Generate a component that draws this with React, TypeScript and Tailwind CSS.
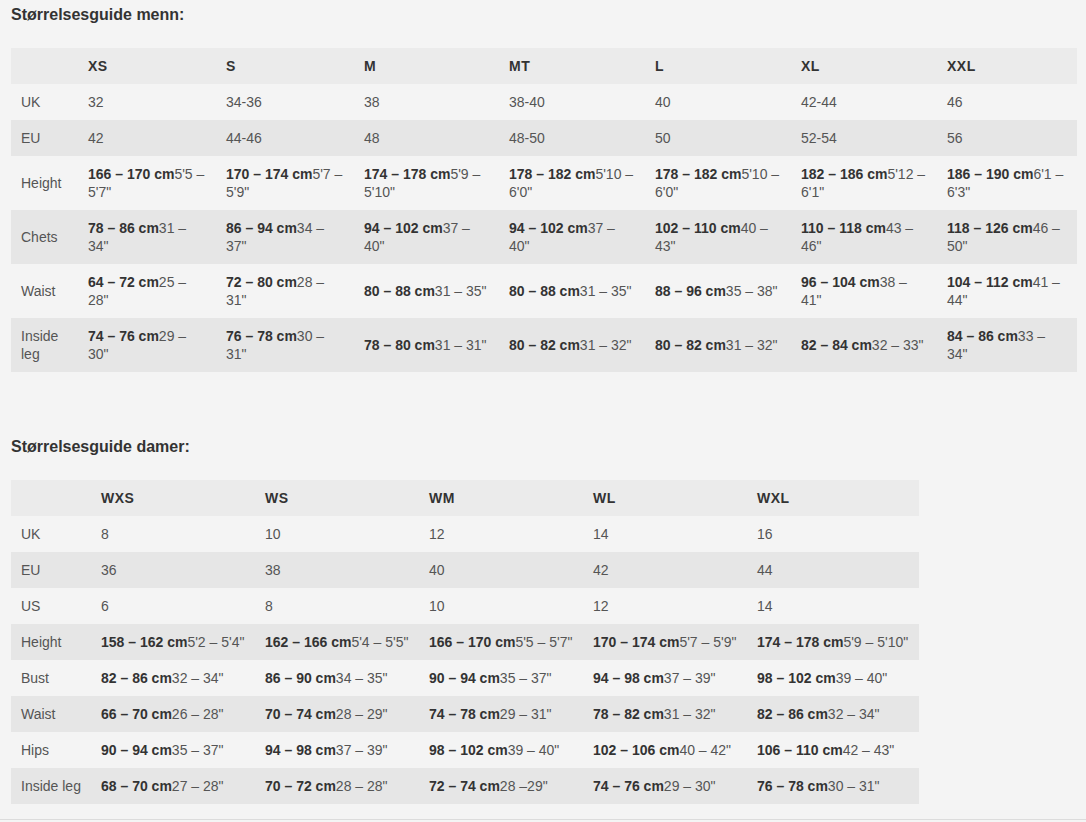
const MEN_SIZES = ['XS', 'S', 'M', 'MT', 'L', 'XL', 'XXL'];
const MEN_COLS = ['w-[67px]', 'w-[138px]', 'w-[138px]', 'w-[145px]', 'w-[146px]', 'w-[146px]', 'w-[146px]', 'w-[140px]'];

type Cell = string | [string, string];

const MEN_ROWS: {label: string; cells: Cell[]}[] = [
  {label: 'UK', cells: ['32', '34-36', '38', '38-40', '40', '42-44', '46']},
  {label: 'EU', cells: ['42', '44-46', '48', '48-50', '50', '52-54', '56']},
  {
    label: 'Height',
    cells: [
      ['166 – 170 cm', '5\'5 – 5\'7"'],
      ['170 – 174 cm', '5\'7 – 5\'9"'],
      ['174 – 178 cm', '5\'9 – 5\'10"'],
      ['178 – 182 cm', '5\'10 – 6\'0"'],
      ['178 – 182 cm', '5\'10 – 6\'0"'],
      ['182 – 186 cm', '5\'12 – 6\'1"'],
      ['186 – 190 cm', '6\'1 – 6\'3"'],
    ],
  },
  {
    label: 'Chets',
    cells: [
      ['78 – 86 cm', '31 – 34"'],
      ['86 – 94 cm', '34 – 37"'],
      ['94 – 102 cm', '37 – 40"'],
      ['94 – 102 cm', '37 – 40"'],
      ['102 – 110 cm', '40 – 43"'],
      ['110 – 118 cm', '43 – 46"'],
      ['118 – 126 cm', '46 – 50"'],
    ],
  },
  {
    label: 'Waist',
    cells: [
      ['64 – 72 cm', '25 – 28"'],
      ['72 – 80 cm', '28 – 31"'],
      ['80 – 88 cm', '31 – 35"'],
      ['80 – 88 cm', '31 – 35"'],
      ['88 – 96 cm', '35 – 38"'],
      ['96 – 104 cm', '38 – 41"'],
      ['104 – 112 cm', '41 – 44"'],
    ],
  },
  {
    label: 'Inside leg',
    cells: [
      ['74 – 76 cm', '29 – 30"'],
      ['76 – 78 cm', '30 – 31"'],
      ['78 – 80 cm', '31 – 31"'],
      ['80 – 82 cm', '31 – 32"'],
      ['80 – 82 cm', '31 – 32"'],
      ['82 – 84 cm', '32 – 33"'],
      ['84 – 86 cm', '33 – 34"'],
    ],
  },
];

const WOMEN_SIZES = ['WXS', 'WS', 'WM', 'WL', 'WXL'];
const WOMEN_COLS = ['w-[80px]', 'w-[164px]', 'w-[164px]', 'w-[164px]', 'w-[164px]', 'w-[172px]'];

const WOMEN_ROWS: {label: string; cells: Cell[]}[] = [
  {label: 'UK', cells: ['8', '10', '12', '14', '16']},
  {label: 'EU', cells: ['36', '38', '40', '42', '44']},
  {label: 'US', cells: ['6', '8', '10', '12', '14']},
  {
    label: 'Height',
    cells: [
      ['158 – 162 cm', '5\'2 – 5\'4"'],
      ['162 – 166 cm', '5\'4 – 5\'5"'],
      ['166 – 170 cm', '5\'5 – 5\'7"'],
      ['170 – 174 cm', '5\'7 – 5\'9"'],
      ['174 – 178 cm', '5\'9 – 5\'10"'],
    ],
  },
  {
    label: 'Bust',
    cells: [
      ['82 – 86 cm', '32 – 34"'],
      ['86 – 90 cm', '34 – 35"'],
      ['90 – 94 cm', '35 – 37"'],
      ['94 – 98 cm', '37 – 39"'],
      ['98 – 102 cm', '39 – 40"'],
    ],
  },
  {
    label: 'Waist',
    cells: [
      ['66 – 70 cm', '26 – 28"'],
      ['70 – 74 cm', '28 – 29"'],
      ['74 – 78 cm', '29 – 31"'],
      ['78 – 82 cm', '31 – 32"'],
      ['82 – 86 cm', '32 – 34"'],
    ],
  },
  {
    label: 'Hips',
    cells: [
      ['90 – 94 cm', '35 – 37"'],
      ['94 – 98 cm', '37 – 39"'],
      ['98 – 102 cm', '39 – 40"'],
      ['102 – 106 cm', '40 – 42"'],
      ['106 – 110 cm', '42 – 43"'],
    ],
  },
  {
    label: 'Inside leg',
    cells: [
      ['68 – 70 cm', '27 – 28"'],
      ['70 – 72 cm', '28 – 28"'],
      ['72 – 74 cm', '28 –29"'],
      ['74 – 76 cm', '29 – 30"'],
      ['76 – 78 cm', '30 – 31"'],
    ],
  },
];

function SizeTable({sizes, cols, rows, width}: {sizes: string[]; cols: string[]; rows: {label: string; cells: Cell[]}[]; width: string}) {
  return (
    <table className={`${width} table-fixed border-collapse text-[14px] leading-[18px] text-[#555]`}>
      <colgroup>
        {cols.map((c, i) => <col key={i} className={c} />)}
      </colgroup>
      <thead>
        <tr className="bg-[#ebebeb]">
          <th className="py-[9px] pl-[10px]" />
          {sizes.map(s => (
            <th key={s} className="py-[9px] pl-[10px] pr-[8px] text-left font-bold tracking-[0.5px] text-[#333]">{s}</th>
          ))}
        </tr>
      </thead>
      <tbody>
        {rows.map((row, r) => (
          <tr key={row.label} className={r % 2 === 1 ? 'bg-[#e6e6e6]' : ''}>
            <td className="py-[9px] pl-[10px] pr-[6px] align-middle">{row.label}</td>
            {row.cells.map((cell, i) => (
              <td key={i} className="py-[9px] pl-[10px] pr-[8px] align-middle">
                {typeof cell === 'string' ? cell : (
                  <>
                    <strong className="font-bold text-[#333]">{cell[0]}</strong>
                    {cell[1]}
                  </>
                )}
              </td>
            ))}
          </tr>
        ))}
      </tbody>
    </table>
  );
}

export default function App() {
  return (
    <div className="min-h-[822px] bg-[#f4f4f4] font-['Liberation_Sans',Arial,sans-serif]">
      <div className="px-[11px] pt-[5px] pb-[15px] border-b border-[#dcdcdc]">
        <h2 className="text-[16px] leading-[20px] font-bold text-[#333]">Størrelsesguide menn:</h2>
        <div className="mt-[23px]">
          <SizeTable sizes={MEN_SIZES} cols={MEN_COLS} rows={MEN_ROWS} width="w-[1066px]" />
        </div>
        <h2 className="mt-[65px] text-[16px] leading-[20px] font-bold text-[#333]">Størrelsesguide damer:</h2>
        <div className="mt-[23px]">
          <SizeTable sizes={WOMEN_SIZES} cols={WOMEN_COLS} rows={WOMEN_ROWS} width="w-[908px]" />
        </div>
      </div>
    </div>
  );
}
